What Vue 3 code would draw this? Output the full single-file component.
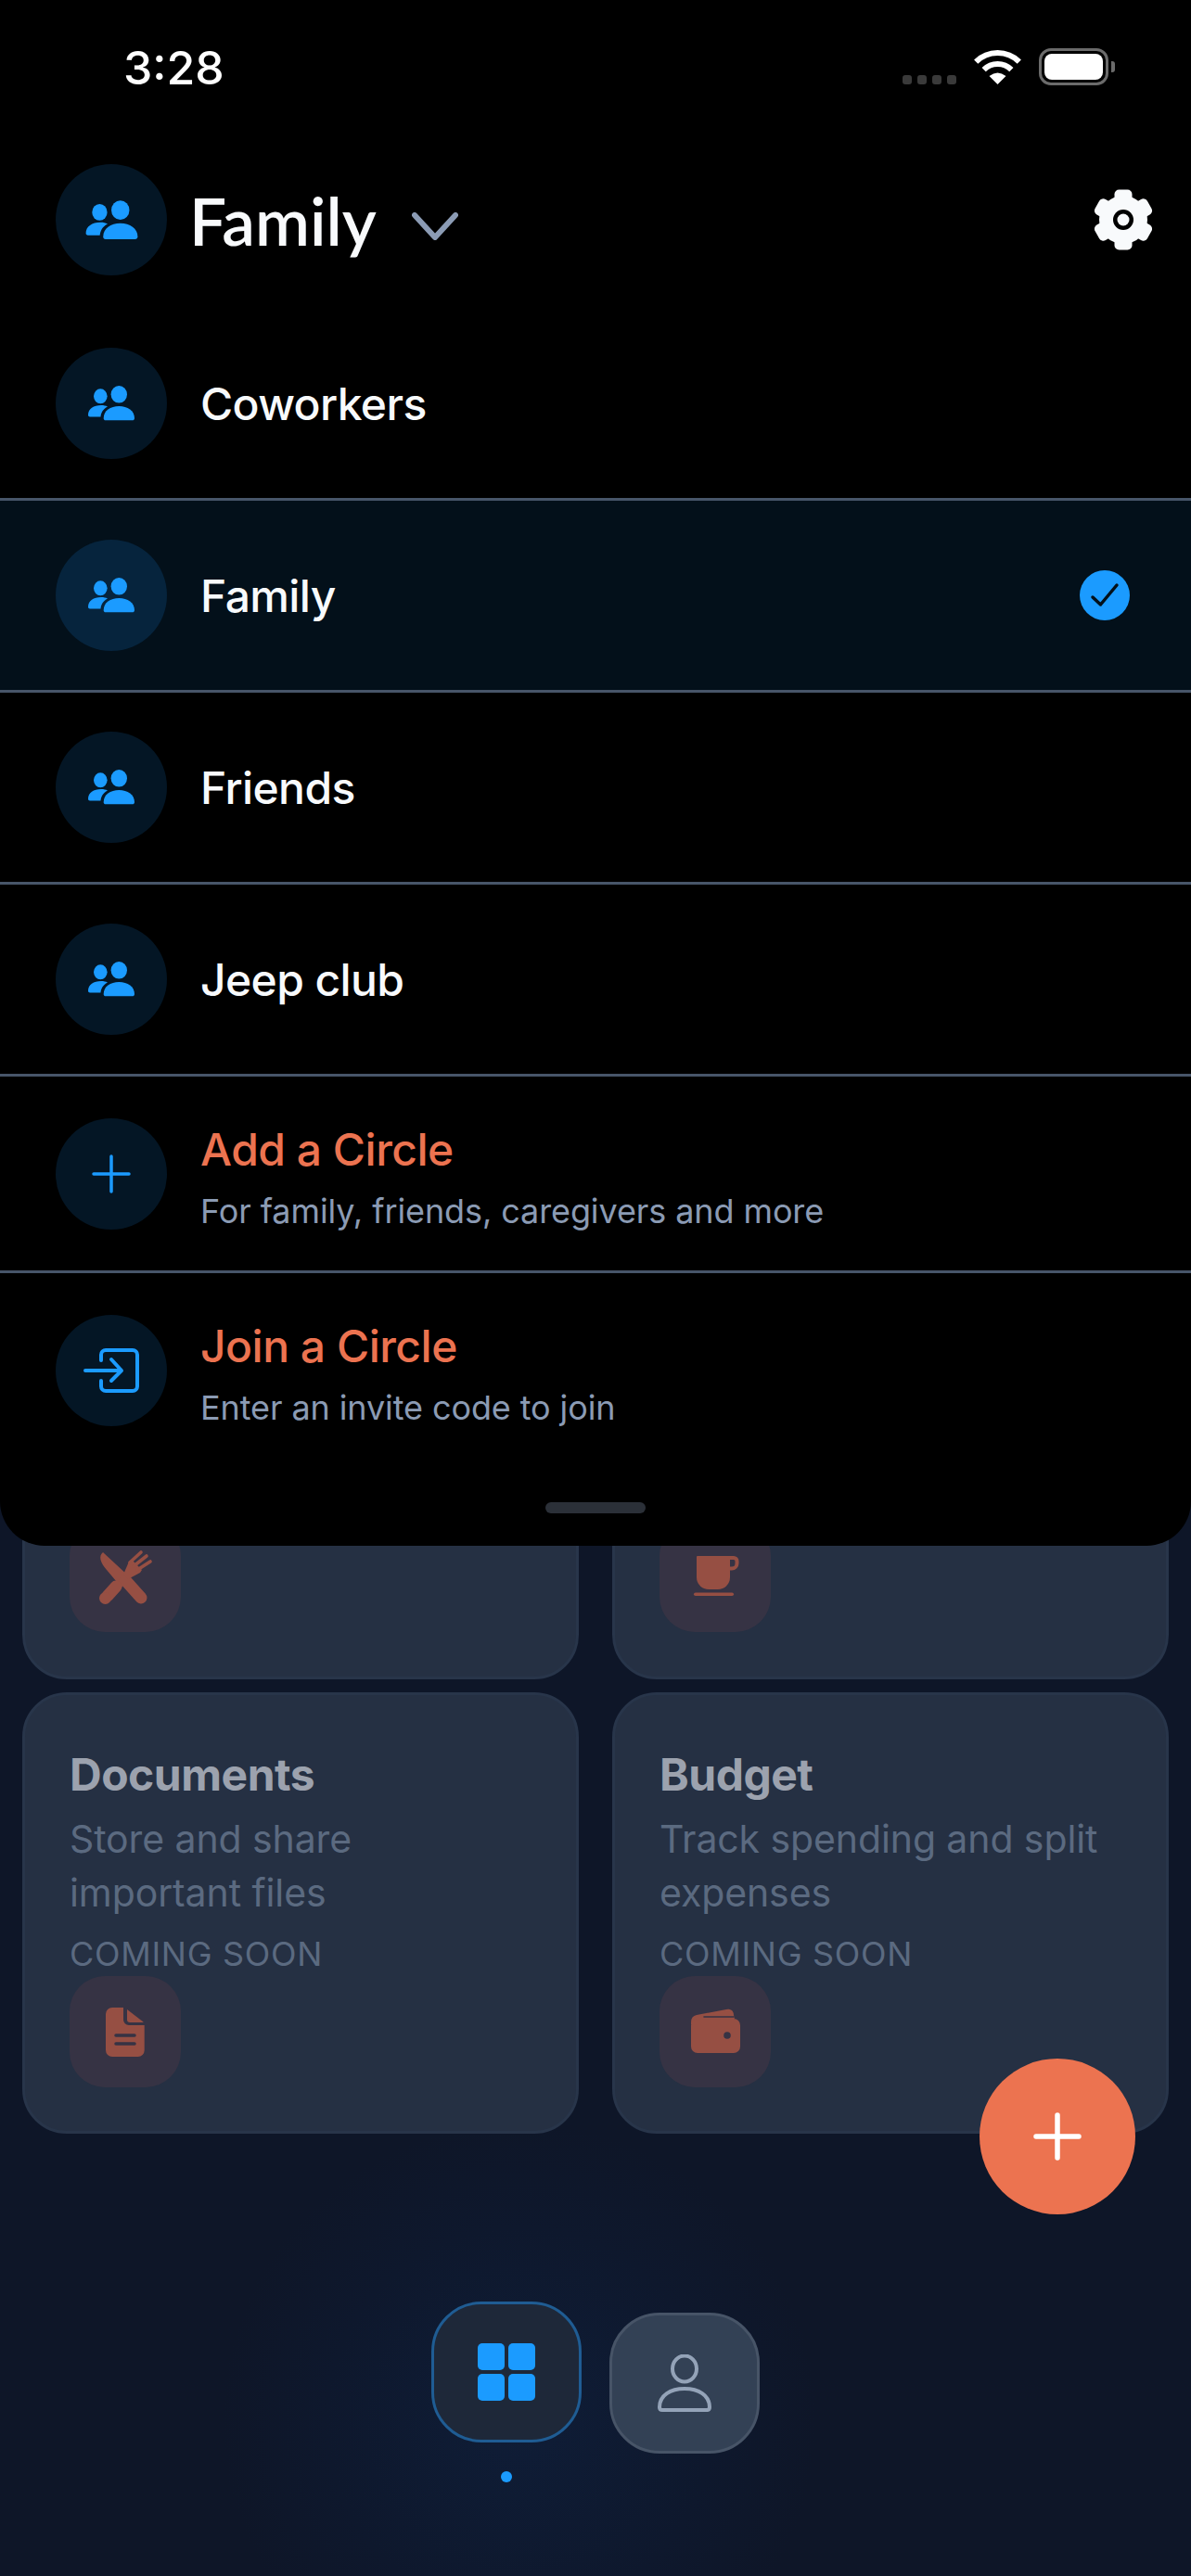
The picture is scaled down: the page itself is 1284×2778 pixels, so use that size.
<script setup>
const circles = [
  { name: 'Coworkers' },
  { name: 'Family', active: true },
  { name: 'Friends' },
  { name: 'Jeep club' }
]
const actions = [
  { icon: 'plus', title: 'Add a Circle', sub: 'For family, friends, caregivers and more' },
  { icon: 'join', title: 'Join a Circle', sub: 'Enter an invite code to join' }
]
const cards = [
  { title: 'Documents', desc: 'Store and share important files', icon: 'doc' },
  { title: 'Budget', desc: 'Track spending and split expenses', icon: 'wallet' }
]
</script>

<template>
  <div class="page">
    <main class="grid">
      <section class="card hidden-top">
        <div class="tile">
          <svg viewBox="0 0 120 120" width="120" height="120">
            <path class="ic" d="M36 34 L64 60 L56 72 L40 53 C33 45 31 38 36 34Z" />
            <path class="ic-line" stroke-width="13" d="M60 64 L77 83" />
            <path class="ic-line" stroke-width="13" stroke-linecap="butt" d="M50 71 L41 81" />
            <circle class="ic" cx="38.500" cy="83.500" r="6.500" />
            <path class="ic" d="M58 58 L64 44 L67 42 L78 53 L76 56 L63 63Z" />
            <path class="ic-line" stroke-width="3.600" d="M65 45 L77 34 M69 49 L83 38 M73 53 L87 44" />
          </svg>
        </div>
      </section>
      <section class="card hidden-top">
        <div class="tile">
          <svg viewBox="0 0 120 120" width="120" height="120">
            <path class="ic" d="M41 38 H76 V61 A13 13 0 0 1 63 74 H53 A13 13 0 0 1 40 61 V39 A1 1 0 0 1 41 38Z" />
            <path class="ic" fill-rule="evenodd" d="M75 38 H80 A5.500 5.500 0 0 1 85.500 43.500 V46 A7.500 7.500 0 0 1 78 53.500 H75Z M76 42 V49.500 H78 A3.500 3.500 0 0 0 81.500 46 V43.500 A1.500 1.500 0 0 0 80 42Z" />
            <rect class="ic" x="37" y="77.500" width="43" height="3.500" rx="1.750" />
          </svg>
        </div>
      </section>
      <section v-for="c in cards" :key="c.title" class="card">
        <h2 class="card-title">{{ c.title }}</h2>
        <p class="card-desc">{{ c.desc }}</p>
        <p class="card-soon">COMING SOON</p>
        <div class="tile">
          <svg v-if="c.icon === 'doc'" viewBox="0 0 120 120" width="120" height="120">
            <path class="ic" d="M46 34 H58 V47 A6 6 0 0 0 64 53 H80.700 V80 A7 7 0 0 1 73.700 87 H46 A7 7 0 0 1 39 80 V41 A7 7 0 0 1 46 34Z" />
            <path class="ic" d="M62 36 L79.500 49.500 V50 H65 A3 3 0 0 1 62 47Z" />
            <path class="ic-cut" d="M50 64 H70 M50 73 H70" />
          </svg>
          <svg v-else viewBox="0 0 120 120" width="120" height="120">
            <path class="ic" d="M34 50 Q34 43 40 42 L72 36 A6 6 0 0 1 80 42 L81 46 H50 V52 H34Z" />
            <rect class="ic" x="34" y="46" width="53" height="37" rx="7" />
            <path class="ic-cut wallet-slit" d="M48 44 H80" />
            <circle class="hole" cx="73" cy="64" r="3.800" />
          </svg>
        </div>
      </section>
    </main>

    <button class="fab" aria-label="Add">
      <svg viewBox="0 0 52 52" width="52" height="52">
        <path d="M26 3 V49 M3 26 H49" stroke="#fff" stroke-width="5.500" stroke-linecap="round" fill="none" />
      </svg>
    </button>

    <nav class="tabs">
      <div class="tab-col">
        <div class="tab tab-active">
          <div class="tab-grid">
            <span></span><span></span><span></span><span></span>
          </div>
        </div>
        <span class="tab-dot"></span>
      </div>
      <div class="tab tab-idle">
        <svg viewBox="0 0 60 62" width="60" height="62">
          <ellipse cx="30" cy="15.500" rx="13" ry="14" fill="none" stroke="#94a3b8" stroke-width="4" />
          <path d="M3 57 C3 44 15 37 30 37 C45 37 57 44 57 57 C57 59 56 60 54 60 H6 C4 60 3 59 3 57Z" fill="none" stroke="#94a3b8" stroke-width="4" stroke-linejoin="round" />
        </svg>
      </div>
    </nav>

    <aside class="sheet">
      <div class="status">
        <span class="time">3:28</span>
        <div class="status-right">
          <div class="signal"><i></i><i></i><i></i><i></i></div>
          <svg class="wifi" viewBox="0 0 51 38" width="51" height="38">
            <path d="M2.200 13.700 A33 33 0 0 1 48.800 13.700 M10.650 22.150 A21 21 0 0 1 40.350 22.150" fill="none" stroke="#fff" stroke-width="6" />
            <path d="M25.500 38 L16.500 29 Q25.500 22 34.500 29Z" fill="#fff" />
          </svg>
          <div class="battery">
            <div class="battery-body"><div class="battery-fill"></div></div>
            <span class="battery-nub"></span>
          </div>
        </div>
      </div>

      <header class="head">
        <div class="avatar">
          <svg class="people people-lg" viewBox="30 40 60 40">
            <ellipse cx="68.300" cy="50.300" rx="8.700" ry="9.300" />
            <path d="M51.700 76 C51.700 68 59 63 68.300 63 C77.500 63 85 68 85 76 C85 77.500 84 78.300 82.500 78.300 H54 C52.500 78.300 51.700 77.500 51.700 76Z" />
            <ellipse cx="48.300" cy="52.300" rx="7.300" ry="8" />
            <path d="M35 72.500 C35 66 41 62 49 62 C52 62 54 62.500 56 63.500 C51 66 49 70 48.500 74.500 H37 C35.800 74.500 35 73.700 35 72.500Z" />
          </svg>
        </div>
        <h1 class="head-title">Family</h1>
        <svg class="chev" viewBox="0 0 50 30" width="50" height="30">
          <path d="M3 3 L25 27 L47 3" fill="none" stroke="#8b9bb4" stroke-width="6" stroke-linecap="round" stroke-linejoin="round" />
        </svg>
        <svg class="gear" viewBox="0 0 66 66" width="66" height="66">
          <g fill="#f8fafc">
            <circle cx="33" cy="33" r="26" />
            <rect x="23.500" y="0.500" width="19" height="65" rx="5" />
            <rect x="23.500" y="0.500" width="19" height="65" rx="5" transform="rotate(60 33 33)" />
            <rect x="23.500" y="0.500" width="19" height="65" rx="5" transform="rotate(120 33 33)" />
          </g>
          <circle cx="33" cy="33" r="11" fill="#000" />
          <circle cx="33" cy="33" r="6.500" fill="#f8fafc" />
        </svg>
      </header>

      <div v-for="c in circles" :key="c.name" class="row" :class="{ 'row-active': c.active }">
        <div class="avatar">
          <svg class="people" viewBox="30 40 60 40">
            <ellipse cx="68.300" cy="50.300" rx="8.700" ry="9.300" />
            <path d="M51.700 76 C51.700 68 59 63 68.300 63 C77.500 63 85 68 85 76 C85 77.500 84 78.300 82.500 78.300 H54 C52.500 78.300 51.700 77.500 51.700 76Z" />
            <ellipse cx="48.300" cy="52.300" rx="7.300" ry="8" />
            <path d="M35 72.500 C35 66 41 62 49 62 C52 62 54 62.500 56 63.500 C51 66 49 70 48.500 74.500 H37 C35.800 74.500 35 73.700 35 72.500Z" />
          </svg>
        </div>
        <span class="row-name">{{ c.name }}</span>
        <svg v-if="c.active" class="check" viewBox="0 0 54 54" width="54" height="54">
          <circle cx="27" cy="27" r="27" fill="#1b9bff" />
          <path d="M14 29 L22.500 37 L40 16" fill="none" stroke="#03101a" stroke-width="3.500" stroke-linecap="round" stroke-linejoin="round" />
        </svg>
      </div>

      <div v-for="(a, i) in actions" :key="a.title" class="action" :class="{ 'action-last': i === actions.length - 1 }">
        <div class="avatar">
          <svg v-if="a.icon === 'plus'" viewBox="0 0 42 42" width="42" height="42">
            <path d="M21 2 V40 M2 21 H40" stroke="#1b9bff" stroke-width="3.500" stroke-linecap="round" fill="none" />
          </svg>
          <svg v-else class="join" viewBox="0 0 60 48" width="60" height="48">
            <path d="M19 13 V7 A5 5 0 0 1 24 2 H53 A5 5 0 0 1 58 7 V41 A5 5 0 0 1 53 46 H24 A5 5 0 0 1 19 41 V35" fill="none" stroke="#1b9bff" stroke-width="4" stroke-linecap="round" />
            <path d="M2 24 H40 M30 12 L41 24 L30 35" fill="none" stroke="#1b9bff" stroke-width="4" stroke-linecap="round" stroke-linejoin="round" />
          </svg>
        </div>
        <div class="action-text">
          <span class="action-title">{{ a.title }}</span>
          <span class="action-sub">{{ a.sub }}</span>
        </div>
      </div>

      <div class="handle"></div>
    </aside>
  </div>
</template>

<style scoped>
.page {
  position: relative;
  width: 1284px;
  height: 2778px;
  overflow: hidden;
  background: radial-gradient(circle 320px at 560px 2610px, #0f1d37 0%, #0e182d 65%, #0e1628 100%), #0e1628;
  font-family: Inter, "Liberation Sans", sans-serif;
}
.grid {
  display: grid;
  grid-template-columns: 600px 600px;
  grid-auto-rows: 476px;
  column-gap: 36px;
  row-gap: 14px;
  padding: 1335px 24px 0;
}
.card {
  display: flex;
  flex-direction: column;
  padding: 57px 48px 0;
  background: #253043;
  border: 3px solid #28354a;
  border-radius: 48px;
  box-sizing: border-box;
}
.hidden-top { justify-content: flex-end; padding-bottom: 48px; }
.card-title {
  margin: 0;
  font-size: 48px;
  line-height: 58px;
  font-weight: 700;
  letter-spacing: -0.500px;
  color: #9ca2ae;
}
.card-desc {
  margin: 11px 0 0;
  font-size: 41px;
  line-height: 58px;
  letter-spacing: -0.100px;
  color: #5b6a80;
}
.card-soon {
  margin: 15px 0 0;
  font-size: 36px;
  line-height: 44px;
  letter-spacing: 0.700px;
  color: #5b6a80;
}
.tile {
  flex: none;
  width: 120px;
  height: 120px;
  border-radius: 38px;
  background: #363344;
  margin-top: 2px;
}
.tile svg { display: block; }
.ic { fill: #964f43; }
.ic-line { fill: none; stroke: #964f43; stroke-linecap: round; }
.ic-cut { fill: none; stroke: #363344; stroke-width: 3.500px; stroke-linecap: round; }
.wallet-slit { stroke-width: 1.600px; }
.hole { fill: #363344; }
.fab {
  position: absolute;
  left: 1056px;
  top: 2220px;
  display: flex;
  align-items: center;
  justify-content: center;
  width: 168px;
  height: 168px;
  padding: 0;
  border: 0;
  border-radius: 50%;
  background: #ec7350;
}
.tabs {
  display: flex;
  justify-content: center;
  align-items: flex-start;
  gap: 30px;
  margin-top: 181px;
}
.tab-col {
  display: flex;
  flex-direction: column;
  align-items: center;
  gap: 31px;
}
.tab {
  display: flex;
  align-items: center;
  justify-content: center;
  width: 162px;
  height: 152px;
  border-radius: 54px;
  box-sizing: border-box;
}
.tab-active { background: #1e2839; border: 3px solid #1f5c93; }
.tab-idle { background: #334155; border: 3px solid #475467; margin-top: 12px; }
.tab-grid {
  display: grid;
  grid-template-columns: 29px 29px;
  grid-auto-rows: 29px;
  gap: 4.500px;
}
.tab-grid span { background: #1b9bff; border-radius: 5px; }
.tab-dot { width: 12px; height: 12px; border-radius: 50%; background: #1b9bff; }
.sheet {
  position: absolute;
  left: 0;
  top: 0;
  display: flex;
  flex-direction: column;
  width: 1284px;
  height: 1667px;
  background: #000;
  border-radius: 0 0 48px 48px;
}
.status {
  display: flex;
  justify-content: space-between;
  align-items: flex-start;
  height: 177px;
  padding: 52px 82px 0 133px;
  box-sizing: border-box;
}
.time {
  font-size: 50px;
  line-height: 42px;
  font-weight: 500;
  color: #fff;
}
.status-right { display: flex; align-items: flex-end; gap: 19px; }
.signal { display: flex; gap: 6px; margin-bottom: 1px; }
.signal i { width: 10px; height: 10px; border-radius: 3px; background: #3a3a3a; }
.wifi { display: block; margin-bottom: 1px; }
.battery { display: flex; align-items: center; gap: 3px; }
.battery-body {
  width: 75px;
  height: 40px;
  padding: 3px;
  border: 3px solid #6b6b6b;
  border-radius: 13px;
  box-sizing: border-box;
}
.battery-fill { height: 100%; border-radius: 8px; background: #fff; }
.battery-nub { width: 4px; height: 12px; border-radius: 0 3px 3px 0; background: #6b6b6b; }
.head {
  display: flex;
  align-items: center;
  height: 120px;
  margin-bottom: 36px;
  padding: 0 40px 0 60px;
}
.head-title {
  margin: 2px 0 0 24px;
  font-family: Lato, "Liberation Sans", sans-serif;
  font-size: 71px;
  line-height: 120px;
  font-weight: 600;
  color: #f8fafc;
}
.chev { margin-left: 38px; margin-top: 14px; }
.gear { margin-left: auto; }
.avatar {
  flex: none;
  display: flex;
  align-items: center;
  justify-content: center;
  width: 120px;
  height: 120px;
  border-radius: 50%;
  background: #041625;
}
.people { display: block; width: 60px; height: 40px; fill: #1b9bff; }
.people-lg { width: 67px; height: 45px; }
.row {
  display: flex;
  align-items: center;
  gap: 36px;
  height: 204px;
  padding: 0 66px 0 60px;
  border-bottom: 3px solid #475569;
}
.row-active { background: #03101a; }
.row-active .avatar { background: #06243d; }
.row-name {
  font-size: 48px;
  font-weight: 500;
  letter-spacing: -0.600px;
  color: #f8fafc;
}
.check { margin-left: auto; }
.action {
  display: flex;
  align-items: center;
  gap: 36px;
  height: 209px;
  padding: 0 60px;
  border-bottom: 3px solid #475569;
}
.action-last { border-bottom: 0; }
.action-text { display: flex; flex-direction: column; gap: 15px; padding-top: 8px; }
.action-title {
  font-size: 48px;
  line-height: 58px;
  font-weight: 500;
  letter-spacing: -0.500px;
  color: #ec7350;
}
.action-sub {
  font-size: 36px;
  line-height: 44px;
  letter-spacing: -0.100px;
  color: #8b9bb4;
}
.handle {
  align-self: center;
  width: 108px;
  height: 12px;
  margin-top: 38px;
  border-radius: 6px;
  background: #2b3038;
}
</style>

<style>
html, body { margin: 0; background: #0e1628; }
</style>
